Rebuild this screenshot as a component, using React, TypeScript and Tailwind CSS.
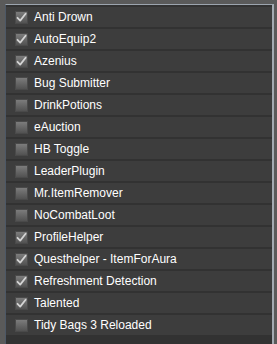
const addons = [
  { name: 'Anti Drown', on: true },
  { name: 'AutoEquip2', on: true },
  { name: 'Azenius', on: true },
  { name: 'Bug Submitter', on: false },
  { name: 'DrinkPotions', on: false },
  { name: 'eAuction', on: false },
  { name: 'HB Toggle', on: false },
  { name: 'LeaderPlugin', on: false },
  { name: 'Mr.ItemRemover', on: false },
  { name: 'NoCombatLoot', on: false },
  { name: 'ProfileHelper', on: true },
  { name: 'Questhelper - ItemForAura', on: true },
  { name: 'Refreshment Detection', on: true },
  { name: 'Talented', on: true },
  { name: 'Tidy Bags 3 Reloaded', on: false },
]

function Check({ on }: { on: boolean }) {
  return (
    <span className="flex h-[13px] w-[13px] shrink-0 items-center justify-center border border-[#4a4a4a] bg-gradient-to-b from-[#7c7c7c] to-[#525252]">
      {on && (
        <svg width="11" height="11" viewBox="0 0 11 11">
          <path d="M1.5 5.8 L4.2 8.6 L9.6 1.8" fill="none" stroke="#d4d4d4" strokeWidth="1.8" strokeLinecap="round" strokeLinejoin="round" />
        </svg>
      )}
    </span>
  )
}

export default function App() {
  return (
    <div className="h-[344px] w-[277px] overflow-hidden bg-[#5a5a5a] pl-[5px] pr-[3px] pt-[4px] font-['Liberation_Sans',Arial,sans-serif]">
      <div className="h-[340px] border-l border-t border-r-2 border-l-[#4d5866] border-t-[#9ca4ae] border-r-[#a4aab2] bg-[#323232] pt-[2px]">
        <div className="flex flex-col gap-[2px]">
          {addons.map((a) => (
            <div key={a.name} className="flex h-[20px] items-center bg-[#3d3d3d] pl-[9px]">
              <Check on={a.on} />
              <span className="ml-[6px] text-[12px] leading-none text-white">{a.name}</span>
            </div>
          ))}
        </div>
      </div>
    </div>
  )
}
